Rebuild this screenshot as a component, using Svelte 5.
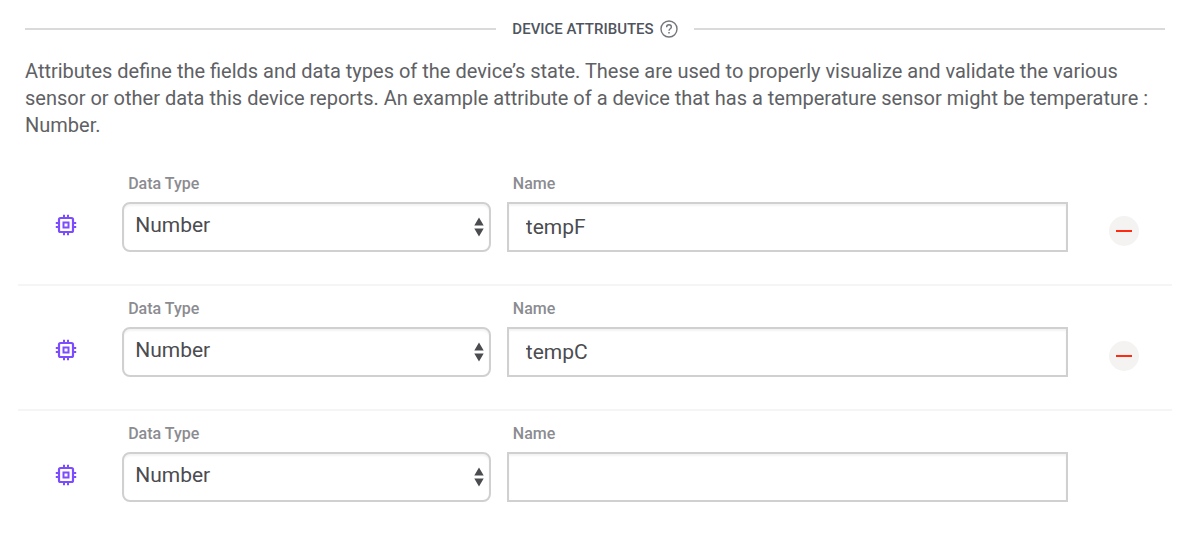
<script>
  let attributes = $state([
    { id: 1, type: 'Number', name: 'tempF', saved: true },
    { id: 2, type: 'Number', name: 'tempC', saved: true },
    { id: 3, type: 'Number', name: '', saved: false }
  ]);

  function remove(id) {
    attributes = attributes.filter((attribute) => attribute.id !== id);
  }
</script>

<section class="panel">
  <header class="heading">
    <h2>DEVICE ATTRIBUTES</h2>
    <button class="help" type="button" aria-label="Help">
      <svg viewBox="0 0 18 18" width="18" height="18" fill="none" stroke="currentColor">
        <circle cx="9" cy="9" r="8" stroke-width="1.4" />
        <path d="M6.6 7.2C6.6 5.7 7.6 4.8 9 4.8S11.4 5.7 11.4 7C11.4 8.700 9 8.800 9 10.700" stroke-width="1.4" />
        <path d="M9 12V13.500" stroke-width="1.5" />
      </svg>
    </button>
  </header>

  <p class="intro">
    Attributes define the fields and data types of the device’s state. These are used to properly visualize and validate the various sensor or other data this device reports. An example attribute of a device that has a temperature sensor might be temperature : Number.
  </p>

  <div class="rows">
    {#each attributes as attribute (attribute.id)}
      <div class="row">
        <svg class="chip" viewBox="0 0 22 22" width="22" height="22" fill="none" stroke="currentColor" stroke-width="2.2">
          <rect x="4" y="4" width="14" height="14" rx="1.500" />
          <rect x="8.500" y="8.500" width="5" height="5" stroke-width="2" />
          <path d="M9 .8V4M13 .8V4M9 18V21.200M13 18V21.200M.8 9H4M.8 13H4M18 9H21.200M18 13H21.200" stroke-width="2" />
        </svg>
        <div class="field">
          <label for="type-{attribute.id}">Data Type</label>
          <div class="select">
            <select id="type-{attribute.id}" bind:value={attribute.type}>
              <option>Number</option>
            </select>
            <svg class="arrows" viewBox="0 0 10 20" width="10" height="20" fill="currentColor" aria-hidden="true">
              <path d="M5 .5L9.700 8.500H.3ZM5 19.500L9.700 11.500H.3Z" />
            </svg>
          </div>
        </div>
        <div class="field">
          <label for="name-{attribute.id}">Name</label>
          <input id="name-{attribute.id}" type="text" bind:value={attribute.name} />
        </div>
        {#if attribute.saved}
          <button class="remove" type="button" aria-label="Remove attribute" onclick={() => remove(attribute.id)}>
            <svg viewBox="0 0 16 2" width="16" height="2"><rect width="16" height="2" fill="#ff2a12" /></svg>
          </button>
        {/if}
      </div>
    {/each}
  </div>
</section>

<style>
  :global(body) {
    margin: 0;
    background: #fff;
  }
  .panel {
    padding: 17px 28px 20px 18px;
    font-family: Roboto, "Noto Sans", sans-serif;
    font-weight: 500;
    color: #67686c;
  }
  .heading {
    display: flex;
    align-items: center;
    height: 24px;
    padding: 0 7px;
  }
  .heading::before,
  .heading::after {
    content: "";
    flex: 1;
    height: 2px;
    background: #dadada;
  }
  h2 {
    margin: 0 6px 0 16px;
    font-size: 15px;
    font-weight: 500;
    line-height: 24px;
    color: #50545d;
  }
  .help {
    display: flex;
    margin: 0 16px 0 0;
    padding: 0;
    border: 0;
    background: none;
    color: #74767c;
  }
  .intro {
    margin: 17px 7px 22px;
    font-size: 20px;
    font-weight: 400;
    line-height: 27px;
    color: #606165;
  }
  .row {
    display: grid;
    grid-template-columns: minmax(0, 1fr) minmax(0, 4fr) minmax(0, 6fr) minmax(0, 1fr);
    height: 125px;
    box-sizing: border-box;
    padding-top: 10px;
    border-bottom: 2px solid #f5f5f5;
  }
  .row:last-child {
    border-bottom-color: transparent;
  }
  .chip {
    margin-top: 43px;
    justify-self: center;
    color: #7c4dff;
  }
  .field {
    padding: 0 8px;
  }
  label {
    display: block;
    padding: 0 6px;
    margin-bottom: 5px;
    font-size: 16px;
    line-height: 26px;
    color: #8b8c91;
  }
  .select {
    position: relative;
  }
  select,
  input {
    display: block;
    width: 100%;
    height: 50px;
    box-sizing: border-box;
    margin: 0;
    border: 2px solid #d0d0d0;
    background: #fff;
    box-shadow: inset 0 2px 2px #f3f3f3;
    font: 400 21px Roboto, "Noto Sans", sans-serif;
    color: #4b4c4f;
  }
  select {
    appearance: none;
    padding: 0 32px 4px 11px;
    border-radius: 8px;
  }
  input {
    padding: 0 17px;
    border-radius: 0;
  }
  .arrows {
    position: absolute;
    right: 7px;
    top: 15px;
    color: #4b4c4f;
    pointer-events: none;
  }
  .remove {
    display: flex;
    align-items: center;
    justify-content: center;
    justify-self: center;
    width: 30px;
    height: 30px;
    margin: 45px 0 0;
    padding: 0;
    border: 0;
    border-radius: 50%;
    background: #f4f3f2;
  }
</style>
